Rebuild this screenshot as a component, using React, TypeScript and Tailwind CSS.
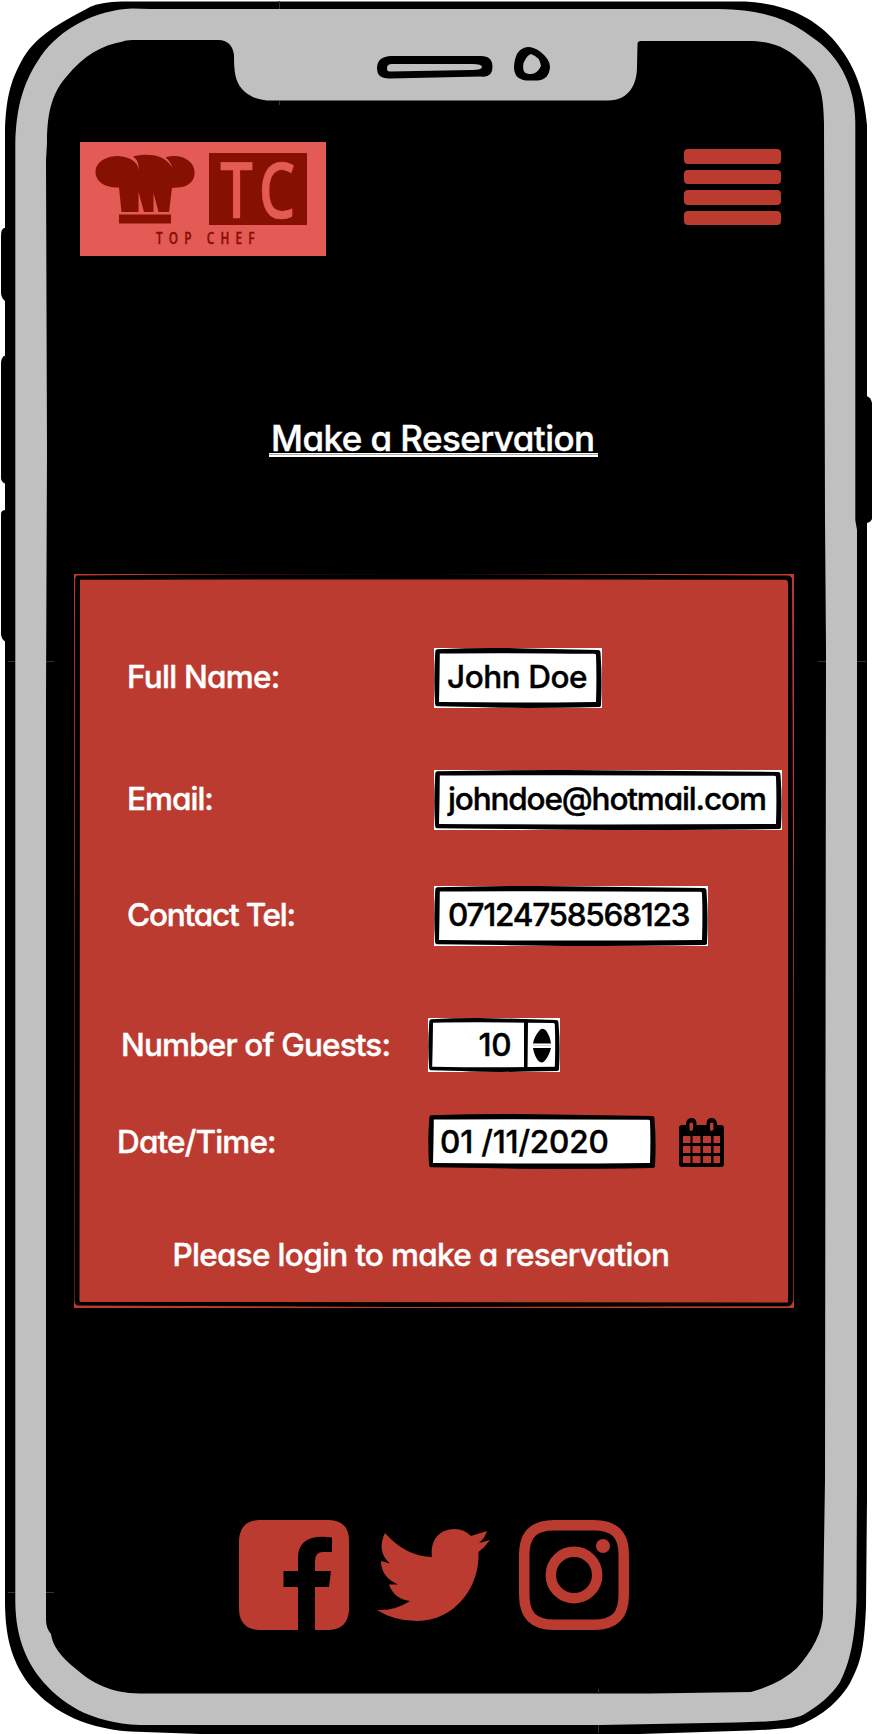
import React from "react";

function DeviceFrame() {
  return (
    <svg className="absolute inset-0" width="872" height="1734" viewBox="0 0 872 1734" aria-hidden="true">
      <g fill="#000">
        <path d="M6 228H4Q1 229 1 236V293Q1 298 6 302Z" />
        <path d="M6 355Q1 357 1 363V478Q1 482 6 484Z" />
        <path d="M6 510Q1 510 1 514V634Q1 639 6 642Z" />
        <path d="M866 396Q871 397 872 403V519Q870 523 866 523Z" />
        <path d="M5 130C6 100 10 82 21 62C34 37 58 24 90 7Q100 2 122 1.500H745C786 4 812 17 832 38C856 65 864 92 867 125V1500L866 1607C864 1650 861 1662 850 1683C836 1707 812 1722 792 1727.500Q770 1730 735 1731L640 1734H200L130 1731.500C80 1728 48 1708 28 1683C10 1658 5 1633 5 1600Z" />
      </g>
      <path
        fill="#c0c0c0"
        d="M15.300 145C16 105 24 81 41 56C60 29 95 10 132 8.500L150 9H719C775 10 795 24 820 43C840 60 855 86 855.300 122V520L857 530V1480L856.500 1600C855 1640 850 1662 840 1682C832 1695 817 1707 803 1715Q788 1722 735 1722.500L600 1725H140C90 1723 60 1703 40 1678C22 1655 15.300 1629 15.300 1600V660Z"
      />
      <path
        fill="#000"
        d="M47 143C47 110 53 92 67 76C83 56 102 45 123 41.500Q126 40 132 40H218C229 40 233 47 234 55C234 71 235 81 242 89Q252 100.500 272 100.500H608C630 100.500 637 83 637 67L637.500 44Q637.500 41 641 41H749C775 41 790 50 804 64C818 77 823.500 89 824 123L825 520L826 650L825 1480L823 1610C824 1630 813 1650 797 1668Q780 1684 751 1692L650 1693.500H140C110 1693 92 1683 76 1669Q53 1651 51 1634Q46 1628 46 1620V700L47 450L46 160Z"
      />
      <path
        fill="#000"
        fillRule="evenodd"
        d="M390 56H481Q492.500 56 492.500 67T481 76.500L390 78.500Q377 79 377 68T390 56ZM392 64Q387 64 387 68T390 71.500L472 70Q482 70 482 67T472 64Z"
      />
      <path
        fill="#000"
        fillRule="evenodd"
        d="M528 47Q534 47 540 51.500Q550 59 550 67Q549 80 537 80.500L526 80.500Q514 79 514 67Q515 48 528 47ZM531 54Q527 55 523.500 63C522 72 525 74 531 74Q537 74 541 66Q540 57 531 54Z"
      />
      <g stroke="#333" strokeWidth="1">
        <path d="M279.500 1V9M279.500 101V105M8 661.500H15M46 661.500H54M818 661.500H826M857 661.500H866M8 1592.500H15M46 1592.500H54M598.500 1689V1694M598.500 1725V1733" />
      </g>
    </svg>
  );
}

function Logo() {
  return (
    <div className="flex h-[114px] w-[246px] flex-col bg-[#e45a54] pt-[11px] text-[#861002]">
      <div className="flex h-[72px]">
        <svg className="ml-[15px] mt-[1px] shrink-0" width="101" height="71" viewBox="95 154 101 71" fill="#861002" aria-hidden="true">
          <path d="M133 156.500C141 154 153 154 160 157C167 160 174 167 173.500 173C172 164 169 160 165.500 157.500C173 155 181 156 186 159C199 166 197 184 182 187L172 188L169 212H158.500L153.500 193V212H144L138.500 192V212H121.500L119 187.500C104 188 95.500 181 95.500 172C96 160 109 156 118 156C129 157 138 161 138.500 170C139 163 137 159.500 133 156.500Z" />
          <path d="M119 214.500H171V223.500H119Z" />
        </svg>
        <div className="ml-[13px] flex h-[72px] w-[98px] items-center overflow-hidden bg-[#861002] pb-[2px] text-[#e45a54]">
          <div className="ml-[11px] flex origin-left scale-x-[0.76] gap-[7px] font-['Open_Sans',sans-serif] text-[77px] font-semibold leading-none">
            <span>T</span>
            <span>C</span>
          </div>
        </div>
      </div>
      <div className="mt-[6px] pl-[76px] font-['Open_Sans',sans-serif] text-[15.500px] font-semibold leading-[15px]">
        <div className="w-max origin-left scale-x-[0.76] tracking-[8.100px]">TOP CHEF</div>
      </div>
    </div>
  );
}

function MenuButton() {
  return (
    <button aria-label="Menu" className="mt-[7px] flex w-[97px] flex-col gap-[6.100px]">
      <span className="h-[14.500px] w-full rounded-[4px] bg-[#bc3b31]" />
      <span className="h-[14.500px] w-full rounded-[4px] bg-[#bc3b31]" />
      <span className="h-[14.500px] w-full rounded-[4px] bg-[#bc3b31]" />
      <span className="h-[14.500px] w-full rounded-[4px] bg-[#bc3b31]" />
    </button>
  );
}

type BoxProps = { w: number; h: number; thick?: number; divider?: number };

function SketchBorder({ w, h, thick = 5, divider }: BoxProps) {
  const o = 0.7;
  const t = thick;
  return (
    <svg className="absolute inset-0" width={w} height={h} viewBox={`0 0 ${w} ${h}`} aria-hidden="true">
      <rect x="3" y="3" width={w - 6} height={h - 6} fill="#fff" />
      <path
        fillRule="evenodd"
        d={`M3 1.200Q${w * 0.3} ${-o} ${w * 0.55} 0.400L${w - 4} 2Q${w - 1.500} 2 ${w - 1.500} 5Q${w + 0.4} ${h * 0.5} ${w - 1} ${h - 3}Q${w - 1} ${h - 1} ${w - 4} ${h - 1}Q${w * 0.5} ${h + 0.8} ${w * 0.25} ${h - 1}L3 ${h - 1.800}Q1 ${h - 2} 1 ${h - 5}Q-0.500 ${h * 0.5} 1.200 5Q1 1.500 3 1.200Z
            M${t + 0.8} ${t + 0.5}Q${t + 0.6} ${h * 0.5} ${t} ${h - t - 1}Q${w * 0.5} ${h - t} ${w - t - 1} ${h - t - 1}Q${w - t - 0.2} ${h * 0.5} ${w - t - 1} ${t + 2}Q${w - t - 1} ${t + 0.8} ${w - t - 3} ${t + 0.8}Q${w * 0.4} ${t - 0.3} ${t + 0.8} ${t + 0.5}Z`}
      />
      {divider !== undefined && <path d={`M${divider} 3H${divider + 4}L${divider + 3.5} ${h - 2}H${divider}Z`} />}
    </svg>
  );
}

function Label({ className, children }: { className: string; children: React.ReactNode }) {
  return <label className={`whitespace-nowrap text-white ${className}`}>{children}</label>;
}

function CalendarIcon() {
  return (
    <svg className="ml-[23px] mt-[1px]" width="45" height="49" viewBox="0 0 45 49" aria-hidden="true">
      <path
        fillRule="evenodd"
        d="M3 7H7V5Q8 0 12.500 0T17.500 5V7H27.500V5Q28 0 32.500 0T38 5V7H42Q45 7 45 10V46Q45 49 42 49H3Q0 49 0 46V10Q0 7 3 7ZM10.500 6V11Q10.500 13 12 13T14 11V6Q14 4.500 12.200 4.500T10.500 6ZM31 6V11Q31 13 32.500 13T34.500 11V6Q34.500 4.500 32.700 4.500T31 6ZM4 18V25H11.500V18ZM13.500 18V25H21.500V18ZM24 18V25H32V18ZM34.500 18V25H41V18ZM4 28V35H11.500V28ZM13.500 28V35H21.500V28ZM24 28V35H32V28ZM34.500 28V35H41V28ZM4 38V45H11.500V38ZM13.500 38V45H21.500V38ZM24 38V45H32V38ZM34.500 38V45H41V38Z"
      />
    </svg>
  );
}

function ReservationForm() {
  return (
    <section className="relative ml-[74px] flex h-[734px] w-[720px] flex-col bg-[#bc3b31] pt-[74px] text-[31.500px]">
      <svg className="absolute inset-0" width="720" height="734" viewBox="0 0 720 734" aria-hidden="true">
        <path
          fillRule="evenodd"
          d="M3 1.500Q180 0 350 0L714 1.500Q718 2 718 6Q719 200 719.300 420V726Q718 732 714 732.300L330 733L4 731.500Q0.500 731 0.500 726V420L1 8Q1 2 3 1.500ZM6 5.800L5.500 727Q5.500 728 7 728L714 728.500V9Q714 6 711 5.800Q550 5 6 5.800Z"
        />
      </svg>
      <div className="relative flex h-[60px] items-center">
        <Label className="ml-[53px] w-[307px] pb-0.5 tracking-[-0.75px]">Full Name:</Label>
        <div className="relative flex h-[60px] w-[168px] items-center bg-white pb-0.5 pl-[13px]">
          <SketchBorder w={168} h={60} />
          <span className="relative whitespace-nowrap tracking-[-0.45px]">John Doe</span>
        </div>
      </div>
      <div className="relative mt-[62px] flex h-[60px] items-center">
        <Label className="ml-[53px] w-[307px] pb-0.5 tracking-[-1px]">Email:</Label>
        <div className="relative flex h-[60px] w-[348px] items-center bg-white pb-0.5 pl-[14px]">
          <SketchBorder w={348} h={60} />
          <span className="relative whitespace-nowrap tracking-[-1.150px]">johndoe@hotmail.com</span>
        </div>
      </div>
      <div className="relative mt-[56px] flex h-[60px] items-center">
        <Label className="ml-[53px] w-[307px] pb-0.5 tracking-[-1.200px]">Contact Tel:</Label>
        <div className="relative flex h-[60px] w-[274px] items-center bg-white pb-0.5 pl-[14px]">
          <SketchBorder w={274} h={60} />
          <span className="relative whitespace-nowrap tracking-[-1.250px]">07124758568123</span>
        </div>
      </div>
      <div className="relative mt-[72px] flex h-[54px] items-center">
        <Label className="ml-[47px] w-[307px] tracking-[-0.85px]">Number of Guests:</Label>
        <div className="relative flex h-[54px] w-[132px] items-center bg-white">
          <SketchBorder w={132} h={54} thick={4.2} divider={96} />
          <span className="relative w-[83px] text-right tracking-[-0.5px]">10</span>
          <svg className="relative ml-[22px]" width="18" height="35" viewBox="0 0 18 35" aria-hidden="true">
            <path d="M0 15.500Q1 9 6 3Q9-1 13 2.500Q17 8 18 15.500ZM0 20H18Q16 28 12 32.500Q9 36.500 5 32.500Q1 27 0 20Z" />
            <path d="M0 17.500H18" stroke="#ccd3d0" />
          </svg>
        </div>
      </div>
      <div className="relative mt-[42px] flex h-[55px] items-center">
        <Label className="ml-[43px] w-[311px] tracking-[-0.85px]">Date/Time:</Label>
        <div className="relative flex h-[55px] w-[228px] items-center pl-[12px]">
          <SketchBorder w={228} h={55} />
          <span className="relative whitespace-nowrap tracking-[-0.2px]">01 /11/2020</span>
        </div>
        <CalendarIcon />
      </div>
      <p className="relative ml-[98.500px] mt-[62px] whitespace-nowrap leading-[48px] tracking-[-0.7px] text-white">
        Please login to make a reservation
      </p>
    </section>
  );
}

function SocialLinks() {
  return (
    <footer className="mt-[212px] flex pl-[239px] text-[#bc3b31]">
      <svg width="110" height="110" viewBox="0 0 110 110" fill="currentColor" role="img" aria-label="Facebook">
        <path d="M20 0H90Q110 1 110 20V90Q109 109 90 110H76V67H90L92 51H76V41Q76 32 84 32H93V17.500Q59 13 59 38V51H44.500V67H59V110H20Q1 109 0 90V20Q1 1 20 0Z" />
      </svg>
      <svg className="ml-[28px]" width="113" height="110" viewBox="377 1520 113 110" fill="currentColor" role="img" aria-label="Twitter">
        <path d="M377 1610Q395 1611 410 1601Q394 1599 389 1584.500L398 1584.500Q381 1577 381 1561L390 1563.500C381 1556 379 1545 385 1533Q405 1556 432 1557C430 1540 439 1529 455 1529Q464 1529 471 1536L487 1531Q485 1538 479 1543L490 1540Q485 1547 478.500 1552C480 1588 454 1621 417 1621Q394 1621 377 1610Z" />
      </svg>
      <svg className="ml-[29px]" width="110" height="110" viewBox="0 0 110 110" fill="none" stroke="currentColor" strokeWidth="10.500" role="img" aria-label="Instagram">
        <path d="M35 5.250H75C96 5.250 104.750 15 104.750 35V75C104.750 96 95 104.750 75 104.750H35C14 104.750 5.250 95 5.250 75V35C5.250 14 15 5.250 35 5.250Z" />
        <circle cx="55" cy="55" r="23.200" />
        <circle cx="84" cy="26" r="7" fill="currentColor" stroke="none" />
      </svg>
    </footer>
  );
}

export default function App() {
  return (
    <main className="relative h-[1734px] w-[872px] overflow-hidden bg-white font-['Inter',sans-serif] font-medium leading-none text-black [-webkit-text-stroke-width:0.4px] [font-feature-settings:'cv11']">
      <DeviceFrame />
      <div className="relative flex flex-col pt-[142px]">
        <header className="flex items-start justify-between pl-[80px] pr-[91.500px]">
          <Logo />
          <MenuButton />
        </header>
        <div className="ml-[269px] mt-[162px] flex h-[39px] w-[329px] flex-col">
          <h1 className="h-[35px] whitespace-nowrap pl-[2px] text-[35px] leading-[40px] tracking-[-0.55px] text-white">
            Make a Reservation
          </h1>
          <div className="h-px bg-white" />
          <div className="h-px bg-[#aaaaaa]" />
          <div className="h-[2px] bg-white" />
        </div>
        <div className="mt-[117px]">
          <ReservationForm />
        </div>
        <SocialLinks />
      </div>
    </main>
  );
}
